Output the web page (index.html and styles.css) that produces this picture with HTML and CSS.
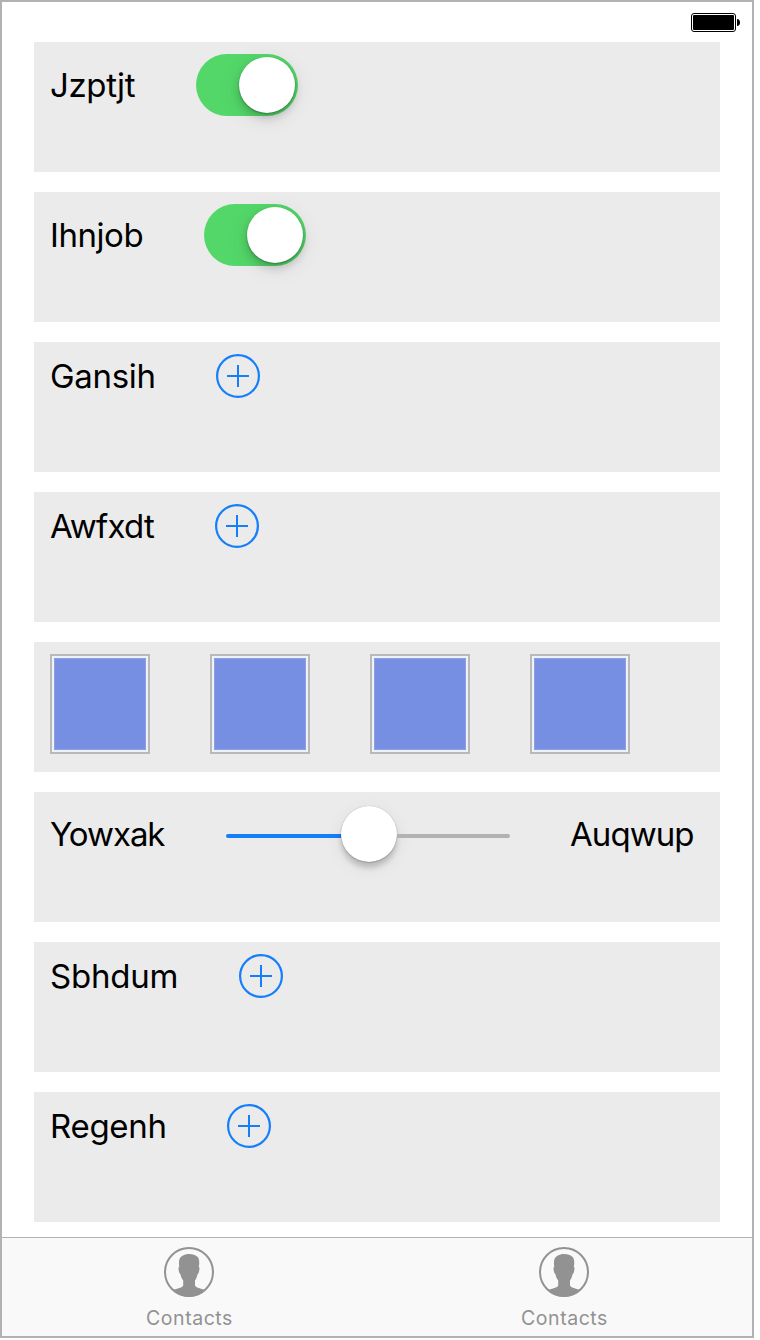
FILE: index.html
```html
<!DOCTYPE html>
<html lang="en">
<head>
<meta charset="utf-8">
<title>Controls</title>
<link rel="stylesheet" href="styles.css">
</head>
<body>
<svg width="0" height="0" class="defs">
  <symbol id="add" viewBox="0 0 44 44"><circle cx="22" cy="22" r="20.900" fill="none" stroke="currentColor" stroke-width="2.200"/><path d="M11 22H33M22 11V33" stroke="currentColor" stroke-width="2"/></symbol>
  <symbol id="person" viewBox="0 0 50 50"><circle cx="25" cy="25" r="24" fill="none" stroke="currentColor" stroke-width="2"/><path fill="currentColor" d="M25 7C29 7 31.500 8.200 33 9.500C35 11 35.500 14 35.200 17L34.800 20C35.900 20.200 35.500 22.500 35 24.500C34.700 26 34.300 26.700 33.600 27C33.100 29.800 32.100 32 31 33.500V38.500C32 41 36.500 41.300 41.500 43.300C37 47.500 31 50 25 50C19 50 13 47.500 8.500 43.300C13.500 41.300 18.500 41 19.200 38.500V33.500C18 32 16.900 29.800 16.400 27C15.700 26.700 15.300 26 15 24.500C14.500 22.500 14.100 20.200 15.200 20L15 17C14.600 13 16 10 18.500 8.800C20.500 7.600 22.500 7 25 7Z"/></symbol>
</svg>
<div class="screen">
  <header class="status">
    <svg class="battery" width="49" height="19" viewBox="0 0 49 19"><rect x=".5" y=".5" width="44" height="18" rx="2.500" fill="#fff" stroke="#000"/><rect x="2" y="2" width="41" height="15" rx="1" fill="#000"/><path d="M46 6C48 6 49 7.500 49 9.500S48 13 46 13Z"/></svg>
  </header>
  <main class="list">
    <section class="row"><span class="label tall w-jzptjt">Jzptjt</span><span class="switch"><span class="knob"></span></span></section>
    <section class="row"><span class="label tall w-ihnjob">Ihnjob</span><span class="switch"><span class="knob"></span></span></section>
    <section class="row"><span class="label w-gansih">Gansih</span><svg class="add"><use href="#add"/></svg></section>
    <section class="row"><span class="label w-awfxdt">Awfxdt</span><svg class="add"><use href="#add"/></svg></section>
    <section class="row"><span class="tile"></span><span class="tile"></span><span class="tile"></span><span class="tile"></span></section>
    <section class="row"><span class="label mid w-yowxak">Yowxak</span><span class="slider"><span class="track done"></span><span class="knob thumb"></span><span class="track"></span></span><span class="label mid w-auqwup">Auqwup</span></section>
    <section class="row"><span class="label w-sbhdum">Sbhdum</span><svg class="add"><use href="#add"/></svg></section>
    <section class="row"><span class="label w-regenh">Regenh</span><svg class="add"><use href="#add"/></svg></section>
  </main>
  <nav class="tabs">
    <a class="tab"><svg class="person"><use href="#person"/></svg><span class="tab-name">Contacts</span></a>
    <a class="tab"><svg class="person"><use href="#person"/></svg><span class="tab-name">Contacts</span></a>
  </nav>
</div>
</body>
</html>
```
FILE: styles.css
```css
* { box-sizing: border-box; }
body { margin: 0; background: #fff; font-family: Inter, "Liberation Sans", sans-serif; }
.defs { display: block; }
.screen { width: 754px; height: 1338px; border: 2px solid #b2b2b2; display: flex; flex-direction: column; }
.status { height: 40px; padding: 11px 12px 0 0; display: flex; justify-content: flex-end; flex: none; }
.list { flex: 1; padding: 0 32px; display: flex; flex-direction: column; gap: 20px; }
.row { height: 130px; background: #ebebeb; padding: 12px 16px; display: flex; align-items: flex-start; gap: 60px; }
.label { height: 44px; line-height: 44px; font-size: 33px; color: #000; white-space: nowrap; flex: none; }
.tall { height: 62px; line-height: 62px; }
.mid { height: 60px; line-height: 60px; }
.w-jzptjt { width: 86px; letter-spacing: -.35px; }
.w-ihnjob { width: 94px; letter-spacing: -.45px; }
.w-gansih { width: 106px; letter-spacing: -.3px; }
.w-awfxdt { width: 105px; letter-spacing: -.75px; }
.w-yowxak { width: 116px; letter-spacing: -1.05px; }
.w-auqwup { width: 124px; letter-spacing: -.95px; }
.w-sbhdum { width: 129px; letter-spacing: -.2px; }
.w-regenh { width: 117px; letter-spacing: -.3px; }
.add { width: 44px; height: 44px; color: #157efb; flex: none; }
.switch { width: 102px; height: 62px; border-radius: 31px; background: #53d769; padding: 3px; display: flex; justify-content: flex-end; flex: none; }
.knob { width: 56px; height: 56px; border-radius: 50%; background: #fff; flex: none; box-shadow: 0 1px 2px rgba(0,0,0,.3), 0 5px 8px rgba(0,0,0,.16), 0 5px 22px rgba(0,0,0,.1); }
.thumb { box-shadow: 0 0 1px rgba(0,0,0,.3), 0 1px 1px rgba(0,0,0,.15), 0 6px 5px rgba(0,0,0,.16), 0 5px 18px rgba(0,0,0,.08); }
.slider { width: 284px; height: 60px; display: flex; align-items: center; flex: none; }
.track { height: 4px; flex: 1; background: #b2b2b2; border-radius: 0 2px 2px 0; margin-top: 4px; }
.done { background: #157efb; border-radius: 2px 0 0 2px; flex: 0 0 115px; }
.tile { width: 100px; height: 100px; background: #768fe2; border: 2px solid #b9b9b9; box-shadow: inset 0 0 0 2px #eef1fa, inset 0 0 0 3px #8c9fe8; flex: none; }
.tabs { height: 99px; border-top: 1px solid #b2b2b2; background: #f9f9f9; display: flex; flex: none; }
.tab { flex: 1; padding: 9px 2px 0 0; display: flex; flex-direction: column; align-items: center; color: #929292; }
.person { width: 50px; height: 50px; }
.tab-name { margin: 9px 0 0 2px; font-size: 19.5px; line-height: 24px; letter-spacing: .55px; }
```
